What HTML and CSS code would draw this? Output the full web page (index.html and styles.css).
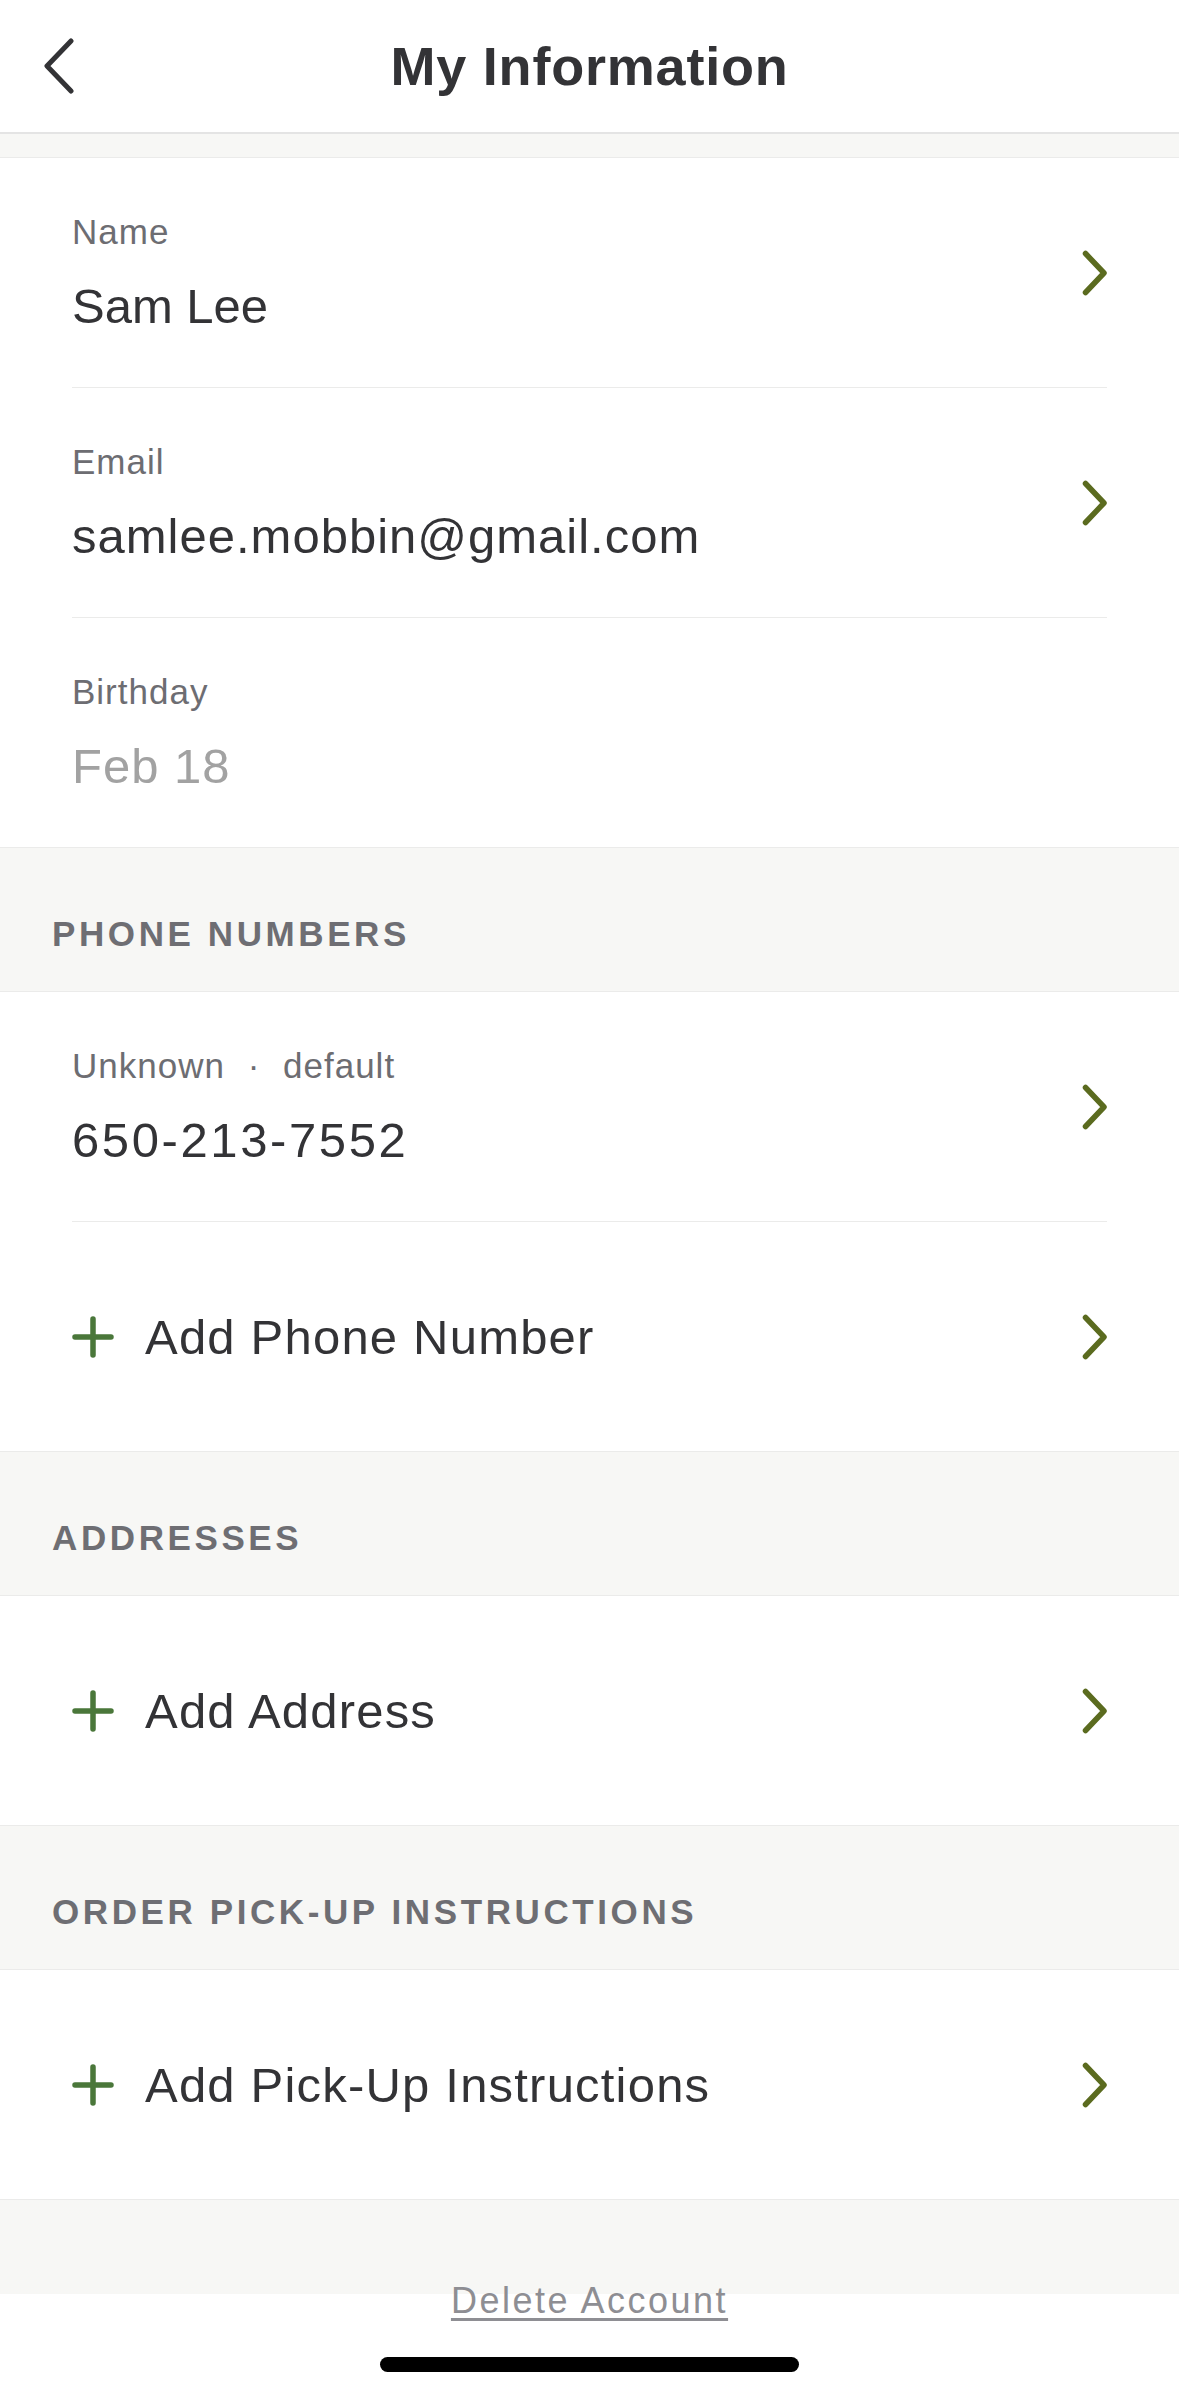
FILE: index.html
```html
<!DOCTYPE html>
<html lang="en">
<head>
    <meta charset="UTF-8">
    <meta name="viewport" content="width=device-width, initial-scale=1.0">
    <title>My Information</title>
    <link rel="stylesheet" href="styles.css">
</head>
<body>
    <header class="top-bar">
        <a class="back" href="#">
            <svg width="32" height="56" viewBox="0 0 32 56"><polyline points="28,3 4,28 28,53" fill="none" stroke="#333336" stroke-width="5" stroke-linecap="round" stroke-linejoin="round"/></svg>
        </a>
        <h1 class="title">My Information</h1>
        <div></div>
    </header>

    <main class="content">
        <section class="group">
            <a class="row field" href="#">
                <div class="field-text">
                    <span class="label">Name</span>
                    <span class="value name">Sam Lee</span>
                </div>
                <svg class="chevron" width="26" height="46" viewBox="0 0 26 46"><polyline points="3.5,3.5 22,23 3.5,42.5" fill="none" stroke="#5b6b1f" stroke-width="5.5" stroke-linecap="round" stroke-linejoin="round"/></svg>
            </a>
            <a class="row field" href="#">
                <div class="field-text">
                    <span class="label">Email</span>
                    <span class="value">samlee.mobbin@gmail.com</span>
                </div>
                <svg class="chevron" width="26" height="46" viewBox="0 0 26 46"><polyline points="3.5,3.5 22,23 3.5,42.5" fill="none" stroke="#5b6b1f" stroke-width="5.5" stroke-linecap="round" stroke-linejoin="round"/></svg>
            </a>
            <div class="row field">
                <div class="field-text">
                    <span class="label">Birthday</span>
                    <span class="value muted">Feb 18</span>
                </div>
            </div>
        </section>

        <h2 class="section-title">PHONE NUMBERS</h2>
        <section class="group">
            <a class="row field" href="#">
                <div class="field-text">
                    <span class="label">Unknown <span class="dot">&middot;</span> default</span>
                    <span class="value phone">650-213-7552</span>
                </div>
                <svg class="chevron" width="26" height="46" viewBox="0 0 26 46"><polyline points="3.5,3.5 22,23 3.5,42.5" fill="none" stroke="#5b6b1f" stroke-width="5.5" stroke-linecap="round" stroke-linejoin="round"/></svg>
            </a>
            <a class="row add" href="#">
                <span class="add-label">
                    <svg class="plus" width="42" height="42" viewBox="0 0 42 42"><path d="M21 3 V39 M3 21 H39" fill="none" stroke="#4a773a" stroke-width="5.5" stroke-linecap="round"/></svg>
                    Add Phone Number
                </span>
                <svg class="chevron" width="26" height="46" viewBox="0 0 26 46"><polyline points="3.5,3.5 22,23 3.5,42.5" fill="none" stroke="#5b6b1f" stroke-width="5.5" stroke-linecap="round" stroke-linejoin="round"/></svg>
            </a>
        </section>

        <h2 class="section-title">ADDRESSES</h2>
        <section class="group">
            <a class="row add" href="#">
                <span class="add-label">
                    <svg class="plus" width="42" height="42" viewBox="0 0 42 42"><path d="M21 3 V39 M3 21 H39" fill="none" stroke="#4a773a" stroke-width="5.5" stroke-linecap="round"/></svg>
                    Add Address
                </span>
                <svg class="chevron" width="26" height="46" viewBox="0 0 26 46"><polyline points="3.5,3.5 22,23 3.5,42.5" fill="none" stroke="#5b6b1f" stroke-width="5.5" stroke-linecap="round" stroke-linejoin="round"/></svg>
            </a>
        </section>

        <h2 class="section-title">ORDER PICK-UP INSTRUCTIONS</h2>
        <section class="group">
            <a class="row add" href="#">
                <span class="add-label">
                    <svg class="plus" width="42" height="42" viewBox="0 0 42 42"><path d="M21 3 V39 M3 21 H39" fill="none" stroke="#4a773a" stroke-width="5.5" stroke-linecap="round"/></svg>
                    Add Pick-Up Instructions
                </span>
                <svg class="chevron" width="26" height="46" viewBox="0 0 26 46"><polyline points="3.5,3.5 22,23 3.5,42.5" fill="none" stroke="#5b6b1f" stroke-width="5.5" stroke-linecap="round" stroke-linejoin="round"/></svg>
            </a>
        </section>
    </main>

    <footer class="footer">
        <a class="delete-link" href="#">Delete Account</a>
        <div class="home-bar"></div>
    </footer>
</body>
</html>
```

FILE: styles.css
```css
body {
    margin: 0;
    font-family: "Liberation Sans", Arial, sans-serif;
    background-color: #f7f7f5;
    color: #333336;
}

a {
    color: inherit;
    text-decoration: none;
}

.top-bar {
    background-color: white;
    height: 132px;
    border-bottom: 2px solid #e4e4e4;
    display: grid;
    grid-template-columns: 1fr auto 1fr;
    align-items: center;
    padding: 0 43px;
}

.back {
    display: flex;
    align-items: center;
}

.title {
    margin: 0;
    font-size: 54px;
    line-height: 64px;
    font-weight: bold;
    letter-spacing: 0.8px;
    color: #333336;
}

.content {
    padding-top: 23px;
}

.group {
    background-color: white;
    border-top: 1px solid #ebebea;
    border-bottom: 1px solid #ebebea;
}

.row {
    display: flex;
    justify-content: space-between;
    align-items: center;
    margin: 0 72px;
    border-bottom: 1px solid #ebebea;
    box-sizing: border-box;
}

.row:last-child {
    border-bottom: none;
}

.field {
    padding: 52px 0 51px;
}

.field-text {
    display: flex;
    flex-direction: column;
    gap: 22px;
}

.label {
    font-size: 35px;
    line-height: 44px;
    letter-spacing: 1px;
    color: #6d6d72;
}

.dot {
    margin: 0 12px;
}

.value {
    font-size: 49px;
    line-height: 60px;
    letter-spacing: 1px;
    color: #333336;
}

.value.name {
    letter-spacing: 0;
}

.value.phone {
    letter-spacing: 2.6px;
}

.value.muted {
    color: #a2a2a2;
}

.chevron {
    flex-shrink: 0;
    margin-right: -1px;
}

.add {
    height: 229px;
}

.add-label {
    display: flex;
    align-items: center;
    gap: 31px;
    font-size: 49px;
    line-height: 60px;
    letter-spacing: 1.2px;
}

.section-title {
    margin: 0;
    padding: 64px 52px 35px;
    font-size: 35px;
    line-height: 44px;
    font-weight: bold;
    letter-spacing: 3.6px;
    color: #6e6e73;
}

.footer {
    background: linear-gradient(to bottom, #f7f7f5 94px, white 94px);
    padding-top: 79px;
    padding-bottom: 24px;
    display: flex;
    flex-direction: column;
    align-items: center;
}

.delete-link {
    font-size: 36px;
    line-height: 44px;
    letter-spacing: 2.5px;
    color: #8e8e93;
    text-decoration: underline;
    text-decoration-thickness: 3px;
    text-underline-offset: 5px;
}

.home-bar {
    width: 419px;
    height: 15px;
    margin-top: 34px;
    background-color: black;
    border-radius: 8px;
}
```
